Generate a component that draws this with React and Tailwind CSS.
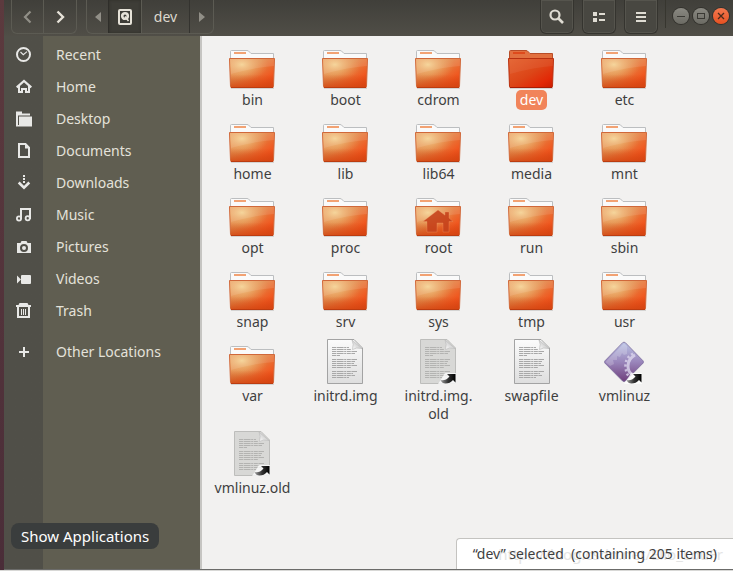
import React, { useState } from 'react'

const places = [
  { name: 'Recent', icon: 'recent' },
  { name: 'Home', icon: 'home' },
  { name: 'Desktop', icon: 'desktop' },
  { name: 'Documents', icon: 'documents' },
  { name: 'Downloads', icon: 'downloads' },
  { name: 'Music', icon: 'music' },
  { name: 'Pictures', icon: 'pictures' },
  { name: 'Videos', icon: 'videos' },
  { name: 'Trash', icon: 'trash' }
]

const files = [
  { name: 'bin', type: 'folder' },
  { name: 'boot', type: 'folder' },
  { name: 'cdrom', type: 'folder' },
  { name: 'dev', type: 'folder' },
  { name: 'etc', type: 'folder' },
  { name: 'home', type: 'folder' },
  { name: 'lib', type: 'folder' },
  { name: 'lib64', type: 'folder' },
  { name: 'media', type: 'folder' },
  { name: 'mnt', type: 'folder' },
  { name: 'opt', type: 'folder' },
  { name: 'proc', type: 'folder' },
  { name: 'root', type: 'folder', home: true },
  { name: 'run', type: 'folder' },
  { name: 'sbin', type: 'folder' },
  { name: 'snap', type: 'folder' },
  { name: 'srv', type: 'folder' },
  { name: 'sys', type: 'folder' },
  { name: 'tmp', type: 'folder' },
  { name: 'usr', type: 'folder' },
  { name: 'var', type: 'folder' },
  { name: 'initrd.img', type: 'text' },
  { name: 'initrd.img.old', lines: ['initrd.img.', 'old'], type: 'text', link: true },
  { name: 'swapfile', type: 'text' },
  { name: 'vmlinuz', type: 'binary', link: true },
  { name: 'vmlinuz.old', type: 'text', link: true }
]

const placeIcons = {
  recent: (
    <>
      <circle cx="7.5" cy="7.5" r="6.5" fill="none" stroke="currentColor" strokeWidth="2" />
      <path d="M4.5 5 L7.3 7.6 L11 4.6" fill="none" stroke="currentColor" strokeWidth="1.2" />
    </>
  ),
  home: (
    <>
      <path d="M0.7 8.3 L8 2 L15.3 8.3" fill="none" stroke="currentColor" strokeWidth="2.2" />
      <path d="M3 7 V13 H6 V10 H10 V13 H13 V7" fill="none" stroke="currentColor" strokeWidth="2" />
    </>
  ),
  desktop: (
    <>
      <path d="M0 0.5 H6 V2.5 H14 V4.5 H2 V15 H0 Z" />
      <path d="M3 5.5 H16 V15.5 H3 Z" />
      <path d="M0 14 H3 V15.5 H0 Z" />
    </>
  ),
  documents: (
    <>
      <path d="M3 1 H9.5 L13 4.7 V14 H3 Z" fill="none" stroke="currentColor" strokeWidth="2" />
      <path d="M9 1 V5.5 H13 Z" />
    </>
  ),
  downloads: (
    <>
      <path d="M7 0 H9 V2 H7 Z M7 3 H9 V5 H7 Z M7 6 H9 V8 H7 Z" />
      <path d="M2.7 7.5 L8 12.6 L13.3 7.5" fill="none" stroke="currentColor" strokeWidth="2.6" />
    </>
  ),
  music: (
    <>
      <circle cx="3" cy="11.5" r="2.1" fill="none" stroke="currentColor" strokeWidth="1.8" />
      <circle cx="11.7" cy="11.3" r="2.1" fill="none" stroke="currentColor" strokeWidth="1.8" />
      <path d="M5 12 V2 H14 V12" fill="none" stroke="currentColor" strokeWidth="2" />
    </>
  ),
  pictures: (
    <path
      fillRule="evenodd"
      d="M5.5 2 H10.5 L11.5 4 H15 V14 H1 V4 H4.5 Z M8 5 A4 4 0 1 0 8 13 A4 4 0 1 0 8 5 Z M8 7 A2 2 0 1 1 8 11 A2 2 0 1 1 8 7 Z"
    />
  ),
  videos: (
    <>
      <rect x="5" y="4" width="10" height="9" rx="1" />
      <path d="M1 4.5 L5 8.5 L1 12.5 Z" />
    </>
  ),
  trash: (
    <>
      <path d="M0 2 H2.5 L3.5 0 H11.5 L12.5 2 H15 V4 H0 Z" />
      <path d="M2 4 V14 H13 V4" fill="none" stroke="currentColor" strokeWidth="2" />
      <path d="M5.5 6 V12 M7.5 6 V12 M9.5 6 V12" fill="none" stroke="currentColor" />
    </>
  ),
  other: <path d="M7 3 H9 V7 H13 V9 H9 V13 H7 V9 H3 V7 H7 Z" />
}

function PlaceLink({ name, icon }) {
  return (
    <a href="#" className="flex h-8 items-center">
      <span className="flex w-10 shrink-0 justify-center">
        <svg viewBox="0 0 16 16" className="h-4 w-4 text-[#e8e8e6]" fill="currentColor">
          {placeIcons[icon]}
        </svg>
      </span>
      <span className="pl-3">{name}</span>
    </a>
  )
}

// gradients shared by every file icon
function IconDefs() {
  return (
    <svg width="0" height="0" className="absolute" aria-hidden="true">
      <defs>
        <linearGradient id="front" x1="0" y1="0" x2="1" y2="0.8">
          <stop offset="0" stopColor="#eb9c66" />
          <stop offset="0.45" stopColor="#e28a4a" />
          <stop offset="0.85" stopColor="#f0571f" />
          <stop offset="1" stopColor="#e84a18" />
        </linearGradient>
        <radialGradient id="glow" cx="0.27" cy="0.2" r="0.6">
          <stop offset="0" stopColor="#f6d898" stopOpacity="0.9" />
          <stop offset="1" stopColor="#eda25c" stopOpacity="0" />
        </radialGradient>
        <linearGradient id="shade" x1="0" y1="0" x2="0" y2="1">
          <stop offset="0.55" stopColor="#d04410" stopOpacity="0" />
          <stop offset="1" stopColor="#d04410" stopOpacity="0.75" />
        </linearGradient>
        <linearGradient id="frontSelected" x1="0" y1="0" x2="1" y2="1">
          <stop offset="0" stopColor="#e4602c" />
          <stop offset="0.5" stopColor="#dc4618" />
          <stop offset="0.8" stopColor="#e22806" />
          <stop offset="1" stopColor="#c81c00" />
        </linearGradient>
        <linearGradient id="paper" x1="0" y1="0" x2="0" y2="1">
          <stop offset="0" stopColor="#fbfbfb" />
          <stop offset="1" stopColor="#dedede" />
        </linearGradient>
        <linearGradient id="fold" x1="0" y1="1" x2="1" y2="0">
          <stop offset="0" stopColor="#ffffff" />
          <stop offset="1" stopColor="#aaaaaa" />
        </linearGradient>
        <linearGradient id="gem" x1="0" y1="0" x2="0" y2="1">
          <stop offset="0" stopColor="#b9c2e4" />
          <stop offset="0.5" stopColor="#9a86bb" />
          <stop offset="1" stopColor="#6f3f7c" />
        </linearGradient>
        <linearGradient id="arrow" x1="0" y1="0" x2="1" y2="0">
          <stop offset="0" stopColor="#a0a0a0" />
          <stop offset="0.5" stopColor="#333333" />
          <stop offset="1" stopColor="#000000" />
        </linearGradient>
      </defs>
    </svg>
  )
}

function FolderIcon({ selected, home }) {
  return (
    <svg viewBox="1 0 48 48" className="h-12 w-12">
      <path d="M3 46.5 H46" stroke="#000000" strokeOpacity="0.12" strokeWidth="1" />
      <path
        d="M2.5 20 V9.5 Q2.5 8.5 3.5 8.5 H19 Q20.5 8.5 21.5 10 L23 11.5 H45.5 V20 Z"
        fill={selected ? '#e2703f' : '#fafafa'}
        stroke={selected ? '#b84d28' : '#bcbec0'}
      />
      <path d="M6 11 H18" stroke={selected ? '#de4a1c' : '#f2a273'} strokeWidth="2" />
      <path
        d="M1.5 16.5 H46.5 L45.5 44.5 Q45.5 45.5 44.5 45.5 H3.5 Q2.5 45.5 2.5 44.5 Z"
        fill={selected ? 'url(#frontSelected)' : 'url(#front)'}
        stroke={selected ? '#b83010' : '#d0683a'}
      />
      {!selected && <path d="M2 17 H46 L45 45 H3 Z" fill="url(#glow)" />}
      <path d="M2 17 H46 L45 45 H3 Z" fill={selected ? 'none' : 'url(#shade)'} />
      <path d="M3 45.5 H45" stroke={selected ? '#a81c04' : '#bc3c10'} />
      <path
        d="M2 17 H46 V24 Q28 25 3 32 Z"
        fill="#ffffff"
        fillOpacity={selected ? '0.06' : '0.1'}
      />
      {home && (
        <path
          d="M24 20 L9 31.5 H13 V42 H23 V33 H29 V42 H35 V31.5 H39 L35 28 V22 H31 V25.2 Z"
          fill="#c5421c"
          fillOpacity="0.9"
          stroke="#f0a070"
          strokeOpacity="0.5"
          strokeWidth="0.6"
        />
      )}
    </svg>
  )
}

function LinkArrow() {
  return (
    <>
      <path d="M31 35 H42 V46 H24 L28 40 Z" fill="#ffffff" fillOpacity="0.75" />
      <path
        d="M33 36 H41.5 V44.5 L39 42 Q36 45.5 31.5 45.5 Q28 45.5 26.5 42 Q31 43.5 35.5 38.5 Z"
        fill="url(#arrow)"
      />
    </>
  )
}

function TextIcon({ link }) {
  return (
    <svg viewBox="0 0 48 48" className="h-12 w-12">
      <g opacity={link ? '0.9' : '1'}>
        <path
          d="M6.5 1.5 H33 L41.5 10 V45.5 H6.5 Z"
          fill={link ? '#d6d6d4' : 'url(#paper)'}
          stroke={link ? '#b8b8b6' : '#a3a3a3'}
        />
        <path d="M31 2 L41 10.5 Q35 9 31.5 11.5 Q33 6 31 2 Z" fill="url(#fold)" stroke="#b4b4b4" strokeWidth="0.6" />
        <path
          d="M11 9.5 H28 M11 11.5 H30 M11 13.5 H36 M11 15.5 H34 M11 17.5 H19 M11 21.5 H36 M11 23.5 H34 M11 25.5 H33 M11 27.5 H36 M11 29.5 H30 M11 33.5 H36 M11 35.5 H32 M11 37.5 H34 M11 39.5 H28"
          stroke={link ? '#adadab' : '#a8a8a8'}
          strokeDasharray="4 0.6 7 0.6 2 0.6"
          fill="none"
        />
      </g>
      {link && <LinkArrow />}
    </svg>
  )
}

function BinaryIcon({ link }) {
  return (
    <svg viewBox="1 0 48 48" className="h-12 w-12">
      <path d="M24 6 L43 25 L24 44 L5 25 Z" fill="#000000" fillOpacity="0.15" />
      <path
        d="M22.6 4.7 Q24 3.6 25.4 4.7 L43 22.8 Q44 24 43 25.2 L25.4 43 Q24 44 22.6 43 L5 25.2 Q4 24 5 22.8 Z"
        fill="url(#gem)"
        stroke="#7d6f9e"
        strokeWidth="0.8"
      />
      <path
        d="M5.5 24 L24 5.5 L27 8 V16 L24 17 L22 15 L20 19 L17 18 L17 22 L13 22 L14 26 L10 28 Z"
        fill="#ffffff"
        fillOpacity="0.2"
      />
      <path d="M35 17 Q28 21 28 28 Q28 34 32 36" fill="none" stroke="#dcd6ec" strokeOpacity="0.8" strokeWidth="3" />
      <path
        d="M33 15.5 Q25 20 25.5 28.5 Q26 36 29 38"
        fill="none"
        stroke="#dcd6ec"
        strokeOpacity="0.8"
        strokeWidth="2.5"
        strokeDasharray="2.2 2.4"
      />
      {link && <LinkArrow />}
    </svg>
  )
}

function FileItem({ file, selected, onSelect }) {
  return (
    <li className="flex justify-center pb-[6px]">
      <button
        type="button"
        onClick={onSelect}
        className="flex flex-col items-center justify-start"
      >
        {file.type === 'folder' && <FolderIcon selected={selected} home={file.home} />}
        {file.type === 'text' && <TextIcon link={file.link} />}
        {file.type === 'binary' && <BinaryIcon link={file.link} />}
        <span
          className={
            selected
              ? 'rounded-[5px] bg-[#f1845a] px-1 py-px leading-[18px] text-white'
              : 'px-1 py-px leading-[18px]'
          }
        >
          {file.lines
            ? file.lines.map(line => <span key={line} className="block">{line}</span>)
            : file.name}
        </span>
      </button>
    </li>
  )
}

function HeaderButton({ label, children }) {
  return (
    <button
      type="button"
      aria-label={label}
      className="flex h-full w-[34px] items-center justify-center rounded-b-md border border-t-0 border-[#35342f] bg-[#484741] shadow-[inset_0_0_0_1px_#55544d]"
    >
      <svg viewBox="0 0 16 16" className="h-4 w-4 text-[#dfdcd3]" fill="currentColor">
        {children}
      </svg>
    </button>
  )
}

function Header() {
  return (
    <header className="flex h-9 shrink-0 items-start justify-between bg-linear-to-b from-[#403f3a] to-[#504e47] pr-1 pl-[7px]">
      <div className="flex h-[34px] gap-[9px]">
        <div className="flex rounded-b-md border border-t-0 border-[#5c5b53] text-[#e6e2d8]">
          <button type="button" aria-label="Back" className="flex w-8 items-center justify-center border-r border-[#5c5b53] text-[#918f87]">
            <svg viewBox="0 0 16 16" className="h-4 w-4" fill="none" stroke="currentColor" strokeWidth="2.2">
              <path d="M10.5 2.5 L5 8 L10.5 13.5" />
            </svg>
          </button>
          <button type="button" aria-label="Forward" className="flex w-8 items-center justify-center">
            <svg viewBox="0 0 16 16" className="h-4 w-4" fill="none" stroke="currentColor" strokeWidth="2.4">
              <path d="M5.5 2.5 L11 8 L5.5 13.5" />
            </svg>
          </button>
        </div>
        <nav className="flex rounded-b-md border border-t-0 border-[#5c5b53] text-[#dcd8ce]">
          <button type="button" aria-label="Scroll left" className="flex w-[21px] items-center justify-center text-[#918f87]">
            <svg viewBox="0 0 6 10" className="h-[10px] w-[6px]" fill="currentColor">
              <path d="M6 0 V10 L0 5 Z" />
            </svg>
          </button>
          <button type="button" aria-label="Computer" className="flex w-[33px] items-center justify-center border-l border-[#2f2e2a] bg-[#3e3d37] shadow-[inset_0_0_3px_#2f2e2a]">
            <svg viewBox="0 0 16 16" className="h-4 w-4" fill="none" stroke="#e6e2d8">
              <rect x="2" y="1" width="12" height="14" rx="1" strokeWidth="2" />
              <circle cx="8" cy="7" r="2.8" strokeWidth="2.6" />
              <path d="M8 7.5 L11.5 12" strokeWidth="1.6" />
            </svg>
          </button>
          <button type="button" className="w-[49px] border-r border-[#34332f] border-l border-l-[#5c5b53]">dev</button>
          <button type="button" aria-label="Scroll right" className="flex w-[23px] items-center justify-center text-[#918f87]">
            <svg viewBox="0 0 6 10" className="h-[10px] w-[6px]" fill="currentColor">
              <path d="M0 0 V10 L6 5 Z" />
            </svg>
          </button>
        </nav>
      </div>

      <div className="flex h-[34px] items-center gap-[7px]">
        <div className="flex h-full gap-2">
          <HeaderButton label="Search">
            <circle cx="6" cy="6" r="4.5" fill="none" stroke="currentColor" strokeWidth="2.2" />
            <path d="M9.5 9.5 L14 14" stroke="currentColor" strokeWidth="2.6" />
          </HeaderButton>
          <HeaderButton label="List view">
            <path d="M2 3 H6 V7 H2 Z M8 4 H14 V6 H8 Z M2 9 H6 V13 H2 Z M8 10 H14 V12 H8 Z" />
          </HeaderButton>
          <HeaderButton label="Menu">
            <path d="M3 3 H13 V5 H3 Z M3 7 H13 V9 H3 Z M3 11 H13 V13 H3 Z" />
          </HeaderButton>
        </div>
        <div className="h-7 w-px self-start bg-[#37362f]" />
        <div className="flex gap-1 pb-[2px]">
          <button type="button" aria-label="Minimize" className="h-4 w-4 rounded-full bg-linear-to-b from-[#8a8982] to-[#6c6b64] ring-1 ring-[#33322d]">
            <svg viewBox="0 0 16 16" fill="none" stroke="#3a3934">
              <path d="M4 8.5 H12" />
            </svg>
          </button>
          <button type="button" aria-label="Maximize" className="h-4 w-4 rounded-full bg-linear-to-b from-[#8a8982] to-[#6c6b64] ring-1 ring-[#33322d]">
            <svg viewBox="0 0 16 16" fill="none" stroke="#3a3934">
              <rect x="4.5" y="5.5" width="7" height="5" />
            </svg>
          </button>
          <button type="button" aria-label="Close" className="h-4 w-4 rounded-full bg-linear-to-b from-[#f4784e] to-[#e6501f] ring-1 ring-[#33322d]">
            <svg viewBox="0 0 16 16" fill="none" stroke="#4a2a1c" strokeWidth="1.3">
              <path d="M5 5 L11 11 M11 5 L5 11" />
            </svg>
          </button>
        </div>
      </div>
    </header>
  )
}

export default function App() {
  const [selected, setSelected] = useState('dev')

  return (
    <div className="relative flex min-h-screen border-b border-[#d8d8d6] font-['Noto_Sans','Open_Sans',sans-serif] text-sm text-[#3f3f3f]">
      <IconDefs />
      <div className="w-1 shrink-0 bg-linear-to-b from-[#5c3a3e] to-[#4a2d38]" />

      <div className="flex min-w-0 grow flex-col border-b border-[#6b6b69]">
        <Header />
        <div className="flex grow">
          <aside className="w-[196px] shrink-0 bg-linear-to-r from-[#504f48] from-[39px] to-[#605e51] to-[39px] pt-[3px] text-[#e4e2da]">
            <nav>
              {places.map(place => (
                <PlaceLink key={place.name} name={place.name} icon={place.icon} />
              ))}
              <div className="pt-[9px]">
                <PlaceLink name="Other Locations" icon="other" />
              </div>
            </nav>
          </aside>

          <main className="relative grow border-l-2 border-[#c6c5c2] bg-[#f2f1f0]">
            <ul className="grid grid-cols-[repeat(auto-fill,93px)] px-1 pt-[6px]">
              {files.map(file => (
                <FileItem
                  key={file.name}
                  file={file}
                  selected={file.name === selected}
                  onSelect={() => setSelected(file.name)}
                />
              ))}
            </ul>

            <div className="absolute right-0 bottom-0 rounded-tl border-t border-l border-[#c4c3c0] bg-white py-[5px] pr-4 pl-4">
              <span className="absolute right-[10px] bottom-1 text-[15px] whitespace-nowrap text-[#e4e4e4]">
                https://blog.csdn.net/Elio_LouFr
              </span>
              <span className="relative whitespace-pre">{`“${selected}” selected  (containing 205 items)`}</span>
            </div>
          </main>
        </div>
      </div>

      <div role="tooltip" className="absolute bottom-[21px] left-[11px] rounded-lg bg-[#3a3d3d] px-[10px] py-[3px] text-[15px] leading-5 text-white">
        Show Applications
      </div>
    </div>
  )
}
